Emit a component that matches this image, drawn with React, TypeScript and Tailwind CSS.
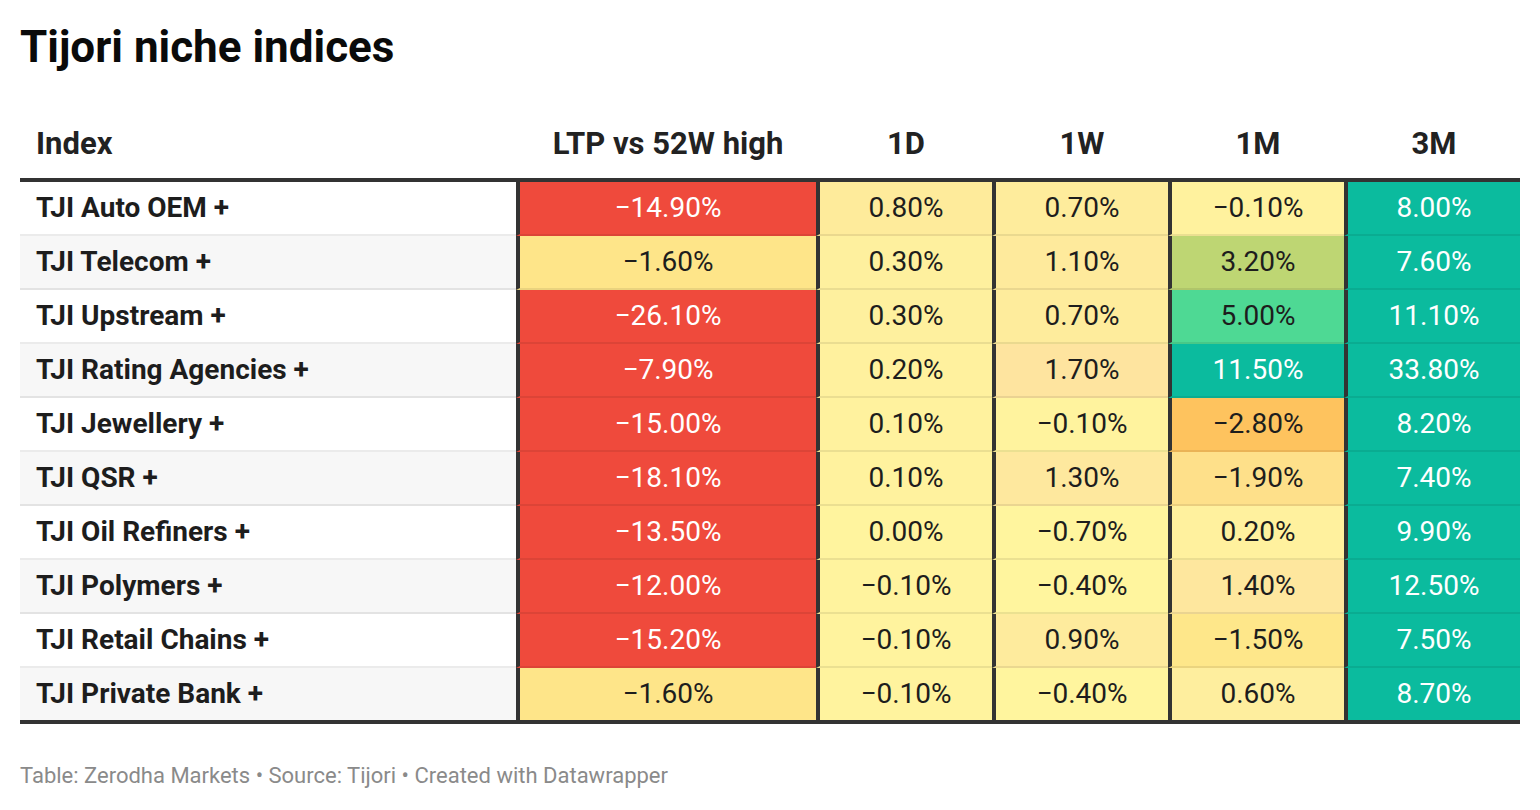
import React from "react";

const font = { fontFamily: "Roboto, 'Noto Sans', sans-serif" };

const RED = "bg-[#ef4a3c] text-white";
const TEAL = "bg-[#0bbb9e] text-white";

// column widths incl. the 4px left rule on value columns
const cols = ["w-[300px]", "w-[176px]", "w-[176px]", "w-[176px]", "w-[176px]"];

const heads = ["LTP vs 52W high", "1D", "1W", "1M", "3M"];

type Cell = [string, string];

const rows: { name: string; cells: Cell[] }[] = [
  {
    name: "TJI Auto OEM +",
    cells: [
      ["−14.90%", RED],
      ["0.80%", "bg-[#feeb9b]"],
      ["0.70%", "bg-[#feec9c]"],
      ["−0.10%", "bg-[#fff29e]"],
      ["8.00%", TEAL],
    ],
  },
  {
    name: "TJI Telecom +",
    cells: [
      ["−1.60%", "bg-[#fee589]"],
      ["0.30%", "bg-[#fef09e]"],
      ["1.10%", "bg-[#feea9c]"],
      ["3.20%", "bg-[#bed673]"],
      ["7.60%", TEAL],
    ],
  },
  {
    name: "TJI Upstream +",
    cells: [
      ["−26.10%", RED],
      ["0.30%", "bg-[#fef09e]"],
      ["0.70%", "bg-[#feec9c]"],
      ["5.00%", "bg-[#4ed994]"],
      ["11.10%", TEAL],
    ],
  },
  {
    name: "TJI Rating Agencies +",
    cells: [
      ["−7.90%", RED],
      ["0.20%", "bg-[#fff19e]"],
      ["1.70%", "bg-[#fee49f]"],
      ["11.50%", TEAL],
      ["33.80%", TEAL],
    ],
  },
  {
    name: "TJI Jewellery +",
    cells: [
      ["−15.00%", RED],
      ["0.10%", "bg-[#fff29e]"],
      ["−0.10%", "bg-[#fff39e]"],
      ["−2.80%", "bg-[#fec35e]"],
      ["8.20%", TEAL],
    ],
  },
  {
    name: "TJI QSR +",
    cells: [
      ["−18.10%", RED],
      ["0.10%", "bg-[#fff29e]"],
      ["1.30%", "bg-[#fee89e]"],
      ["−1.90%", "bg-[#fee08a]"],
      ["7.40%", TEAL],
    ],
  },
  {
    name: "TJI Oil Refiners +",
    cells: [
      ["−13.50%", RED],
      ["0.00%", "bg-[#fff49e]"],
      ["−0.70%", "bg-[#fff59e]"],
      ["0.20%", "bg-[#fff19e]"],
      ["9.90%", TEAL],
    ],
  },
  {
    name: "TJI Polymers +",
    cells: [
      ["−12.00%", RED],
      ["−0.10%", "bg-[#fff39e]"],
      ["−0.40%", "bg-[#fff59e]"],
      ["1.40%", "bg-[#fee79e]"],
      ["12.50%", TEAL],
    ],
  },
  {
    name: "TJI Retail Chains +",
    cells: [
      ["−15.20%", RED],
      ["−0.10%", "bg-[#fff39e]"],
      ["0.90%", "bg-[#feeb9d]"],
      ["−1.50%", "bg-[#fee78a]"],
      ["7.50%", TEAL],
    ],
  },
  {
    name: "TJI Private Bank +",
    cells: [
      ["−1.60%", "bg-[#fee589]"],
      ["−0.10%", "bg-[#fff39e]"],
      ["−0.40%", "bg-[#fff59e]"],
      ["0.60%", "bg-[#feee9e]"],
      ["8.70%", TEAL],
    ],
  },
];

export default function App() {
  return (
    <div className="min-h-[810px] w-[1540px] bg-white px-5 pt-[22px] text-[#1d1d1d]" style={font}>
      <h1 className="text-[44px] font-bold leading-[50px] text-[#0a0a0a]">
        Tijori niche indices
      </h1>

      <div className="w-[1500px]">
        <div className="flex h-[106px] items-end pb-[16px] text-[31px] font-bold leading-[36px] text-[#222]">
          <div className="w-[496px] pl-4">Index</div>
          {heads.map((h, i) => (
            <div key={h} className={cols[i] + " pl-[4px] text-center"}>
              {h}
            </div>
          ))}
        </div>

        <div className="border-y-4 border-[#333]">
          {rows.map((r, ri) => {
            const last = ri === rows.length - 1;
            const line = last ? "" : " border-b-2 border-b-black/[0.08]";
            return (
              <div key={r.name} className="flex h-[54px] text-[28px] leading-[34px] last:h-[52px]">
                <div
                  className={
                    "flex w-[496px] items-center pl-4 font-bold " +
                    (ri % 2 ? "bg-[#f7f7f7]" : "bg-white") +
                    line
                  }
                >
                  {r.name}
                </div>
                {r.cells.map(([v, cls], ci) => (
                  <div
                    key={ci}
                    className={
                      cols[ci] +
                      " flex items-center justify-center border-l-4 border-l-[#333] " +
                      cls +
                      line
                    }
                  >
                    {v}
                  </div>
                ))}
              </div>
            );
          })}
        </div>
      </div>

      <p className="mt-[40px] text-[22px] leading-[24px] text-[#8a8a8a]">
        Table: Zerodha Markets • Source: Tijori • Created with Datawrapper
      </p>
    </div>
  );
}
